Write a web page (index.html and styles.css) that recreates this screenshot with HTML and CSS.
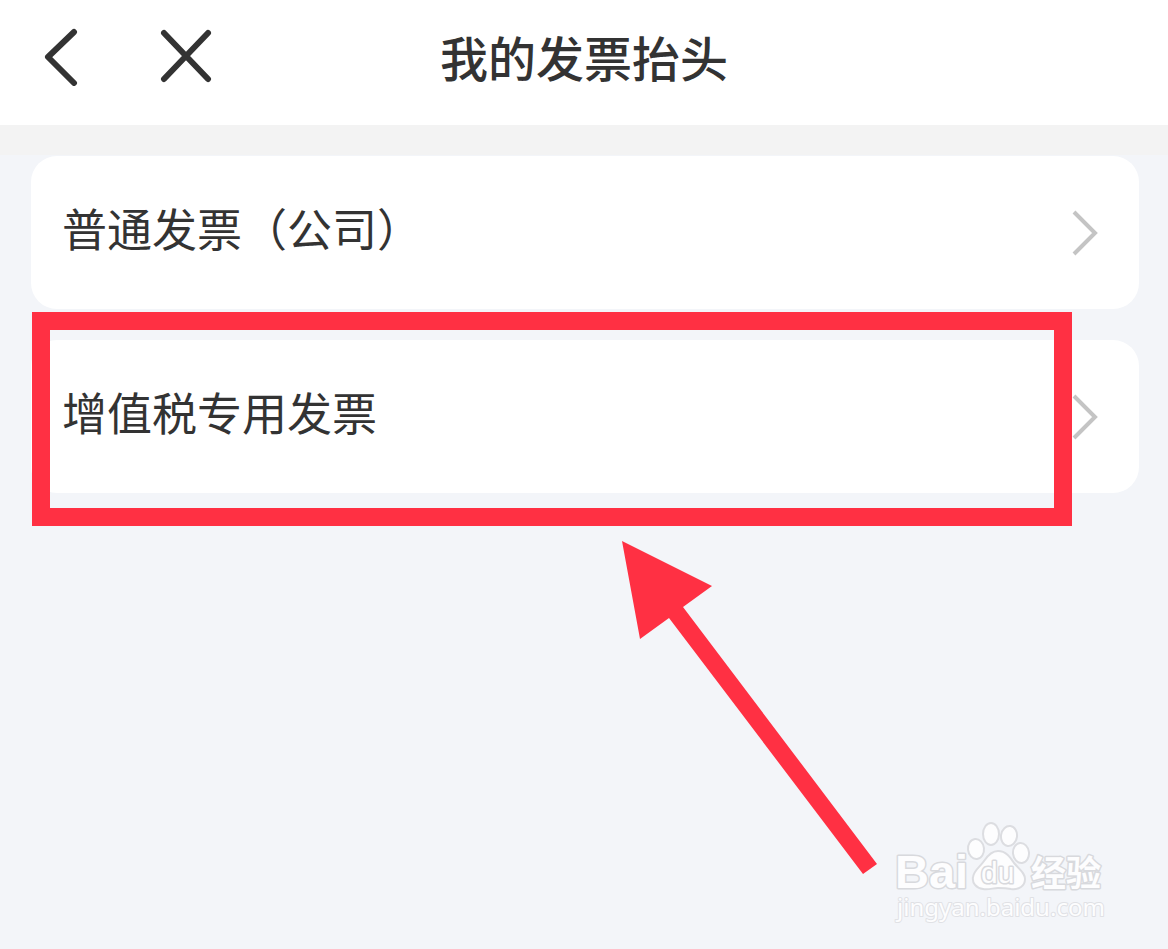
FILE: index.html
```
<!DOCTYPE html>
<html lang="zh-CN">
<head>
  <meta charset="UTF-8">
  <meta name="viewport" content="width=device-width, initial-scale=1.0">
  <title>我的发票抬头</title>
  <link rel="stylesheet" href="styles.css">
</head>
<body>
  <header class="header">
    <div class="header_btns">
      <button type="button" class="icon_btn" aria-label="返回">
        <svg width="36" height="60" viewBox="0 0 36 60"><path d="M30 6L4 31L30 57"/></svg>
      </button>
      <button type="button" class="icon_btn" aria-label="关闭">
        <svg width="52" height="60" viewBox="0 0 52 60"><path d="M4 7L48 53M48 7L4 53"/></svg>
      </button>
    </div>
    <h1 class="title">我的发票抬头</h1>
  </header>
  <main class="main">
    <ul class="list">
      <li class="list_item">
        <a href="#" class="list_link">
          <span>普通发票（公司）</span>
          <svg class="arrow_icon" width="26" height="60" viewBox="0 0 26 60"><path d="M2 14L23 35L2 56"/></svg>
        </a>
      </li>
      <li class="list_item">
        <a href="#" class="list_link">
          <span>增值税专用发票</span>
          <svg class="arrow_icon" width="26" height="60" viewBox="0 0 26 60"><path d="M2 14L23 35L2 56"/></svg>
        </a>
        <div class="mark_box"></div>
        <svg class="mark_arrow" width="256" height="334" viewBox="0 0 256 334"><path d="M0 0L90 45L61 66L255 323L241 333L47 77L18 98Z"/></svg>
      </li>
    </ul>
  </main>
  <!-- 水印 -->
  <svg class="watermark" width="220" height="110" viewBox="0 0 220 110">
    <g class="wm_shape">
      <ellipse cx="85" cy="30" rx="8" ry="10" transform="rotate(-6 85 30)"/>
      <ellipse cx="100" cy="15" rx="8" ry="11"/>
      <ellipse cx="118" cy="17" rx="8" ry="10" transform="rotate(8 118 17)"/>
      <ellipse cx="130" cy="34" rx="8" ry="10" transform="rotate(-6 130 34)"/>
      <path d="M107 32C115 32 119 38 123 44C129 51 134 54 134 60C134 67 128 71 120 70C115 69 112 69 107 69C102 69 98 71 92 70C85 69 81 64 82 58C83 51 89 48 93 42C97 36 101 32 107 32Z"/>
    </g>
    <text class="wm_text wm_logo" x="4" y="69">Bai</text>
    <text class="wm_text wm_du" x="90" y="64">du</text>
    <text class="wm_text wm_cn" x="140" y="67">经验</text>
    <text class="wm_text wm_url" x="6" y="97">jingyan.baidu.com</text>
  </svg>
</body>
</html>
```

FILE: styles.css
```
*{margin: 0;padding: 0;box-sizing: border-box;}
html,body{width: 100%;height: 100%;}
body{position: relative;display: flex;flex-direction: column;overflow: hidden;background-color: #f3f5f9;color: #333;font-family: "Noto Sans CJK SC", sans-serif;}
ul{list-style: none;}
a{color: inherit;text-decoration: none;}
svg{display: block;}

.header{display: grid;grid-template-columns: 1fr auto 1fr;align-items: center;padding: 26px 44px 39px;background-color: #fff;border-bottom: 30px solid #f3f3f3;}
.header_btns{display: flex;gap: 80px;}
.icon_btn{border: 0;background: none;cursor: pointer;}
.icon_btn path{fill: none;stroke: #333;stroke-width: 6;stroke-linecap: round;stroke-linejoin: round;}
.title{font-size: 48px;font-weight: 500;line-height: 60px;}

.main{flex: 1;padding: 1px 29px 0 31px;}
.list{display: flex;flex-direction: column;gap: 31px;}
.list_item{position: relative;}
.list_link{display: flex;justify-content: space-between;align-items: center;padding: 39px 41px 48px 31px;border-radius: 26px;background-color: #fff;font-size: 45px;line-height: 66px;}
.arrow_icon path{fill: none;stroke: #c4c4c4;stroke-width: 4;}

/* 标注 */
.mark_box{position: absolute;top: -28px;right: 67px;bottom: -33px;left: 1px;border: 18px solid #ff3043;pointer-events: none;}
.mark_arrow{position: absolute;top: 201px;left: 591px;fill: #ff3043;pointer-events: none;}

.watermark{position: absolute;right: 57px;bottom: 20px;}
.wm_shape{fill: #fdfdfe;stroke: #dcdde1;stroke-width: 2;}
.wm_text{fill: #fdfdfe;stroke: #d8d9dd;stroke-width: 3;stroke-linejoin: round;paint-order: stroke;}
.wm_logo{font: bold 47px "Liberation Sans", sans-serif;}
.wm_du{font: 30px "Liberation Sans", sans-serif;}
.wm_cn{font: bold 35px "Noto Sans CJK SC", sans-serif;}
.wm_url{font: 24px "Noto Sans", sans-serif;stroke: #e0e1e5;stroke-width: 2;}
```
